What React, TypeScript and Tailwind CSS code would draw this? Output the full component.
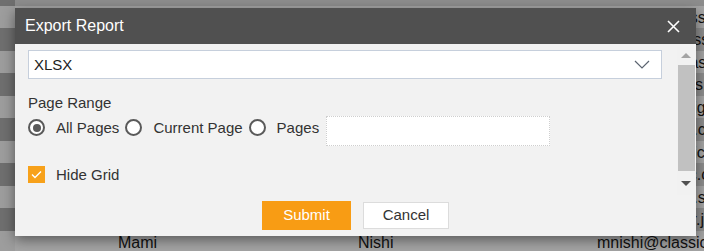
import React from "react";

const rows = [
  { first: "", last: "", email: "" },
  { first: "Yuki", last: "Tanaka", email: "ytanaka@classic.jp" },
  { first: "Hiro", last: "Ito", email: "hito@mail.classic.jp" },
  { first: "Aiko", last: "Mori", email: "amori@my.class.jp" },
  { first: "Taro", last: "Yamada", email: "tyamada@clas.m.jp" },
  { first: "Emi", last: "Kato", email: "ekato@clas.sight.jp" },
  { first: "Ryo", last: "Abe", email: "rabe@classic.co.jp" },
  { first: "Sora", last: "Ueda", email: "sueda@classic.ss.jp" },
  { first: "Nao", last: "Ono", email: "nono@classic.cr.jp" },
  { first: "Kaito", last: "Endo", email: "kendo@class.ss.jp" },
  { first: "Rina", last: "Goto", email: "rgoto@mail.cr.jp" },
  { first: "Mami", last: "Nishi", email: "mnishi@classic.jp" },
];

const Radio = ({ checked }: { checked?: boolean }) => (
  <span className="flex h-[17px] w-[17px] shrink-0 items-center justify-center rounded-full border-2 border-[#5a5a5a] bg-white">
    {checked && <span className="h-[8px] w-[8px] rounded-full bg-[#5a5a5a]" />}
  </span>
);

export default function App() {
  return (
    <div className="relative h-[251px] w-[704px] overflow-hidden bg-[#8a8a8a] font-[family-name:'Liberation_Sans',Arial,sans-serif]">
      {/* grid behind the modal */}
      <div className="-mt-[17px] flex flex-col">
        {rows.map((r, i) => (
          <div
            key={i}
            className={`grid h-[22.5px] grid-cols-[15px_103px_240px_239px_1fr] items-center text-[16px] text-[#111] ${
              i % 2 === 0 ? "bg-[#8d8d8d]" : "bg-[#a4a4a4]"
            }`}
          >
            <span className={`h-full ${i % 2 === 0 ? "bg-[#6f6f6f]" : "bg-[#9d9d9d]"}`} />
            <span />
            <span className="whitespace-nowrap">{r.first}</span>
            <span className="whitespace-nowrap">{r.last}</span>
            <span className="whitespace-nowrap">{r.email}</span>
          </div>
        ))}
      </div>

      {/* modal */}
      <div className="absolute left-[15px] top-[8px] flex h-[228px] w-[681px] flex-col bg-[#f2f2f2] shadow-[0_4px_12px_rgba(0,0,0,0.45)]">
        <div className="flex h-[36px] shrink-0 items-center justify-between bg-[#505050] pl-[10px] pr-[16px]">
          <span className="text-[16px] leading-[18px] text-white">Export Report</span>
          <svg width="13" height="13" viewBox="0 0 13 13">
            <path d="M1 1L12 12M12 1L1 12" stroke="#fff" strokeWidth="1.6" />
          </svg>
        </div>

        <div className="flex h-[152px] shrink-0">
          <div className="flex w-[647px] flex-col pl-[13px] pt-[6px] text-[15px] text-[#333]">
            <div className="flex h-[29px] items-center justify-between border border-[#c6cfdc] bg-white pl-[5px] pr-[11px]">
              <span className="leading-[17px] text-[#222]">XLSX</span>
              <svg width="16" height="9" viewBox="0 0 16 9">
                <path d="M1 1L8 8L15 1" fill="none" stroke="#5b6470" strokeWidth="1.2" />
              </svg>
            </div>

            <div className="mt-[15px] leading-[17px]">Page Range</div>

            <div className="mt-[5px] flex items-start">
              <div className="mt-[3px] flex h-[17px] items-center">
                <Radio checked />
                <span className="ml-[11px] leading-[17px]">All Pages</span>
              </div>
              <div className="ml-[6px] mt-[3px] flex h-[17px] items-center">
                <Radio />
                <span className="ml-[11px] leading-[17px]">Current Page</span>
              </div>
              <div className="ml-[6px] mt-[3px] flex h-[17px] items-center">
                <Radio />
                <span className="ml-[11px] leading-[17px]">Pages</span>
              </div>
              <div className="ml-[7px] h-[30px] w-[224px] border border-dotted border-[#cfcfcf] bg-white" />
            </div>

            <div className="mt-[20px] flex items-center">
              <span className="flex h-[17px] w-[17px] items-center justify-center bg-[#f7a11a]">
                <svg width="11" height="9" viewBox="0 0 11 9">
                  <path d="M1 4.5L4 7.5L10 1.5" fill="none" stroke="#fff" strokeWidth="1.4" />
                </svg>
              </span>
              <span className="ml-[11px] leading-[17px]">Hide Grid</span>
            </div>
          </div>

          {/* scrollbar */}
          <div className="ml-[15px] mt-[3px] flex h-[148px] w-[18px] flex-col items-center bg-[#f1f1f1]">
            <div className="mt-[6px] h-0 w-0 border-x-[5px] border-b-[5px] border-x-transparent border-b-[#a3a3a3]" />
            <div className="mt-[7px] h-[106px] w-[17px] bg-[#c1c1c1]" />
            <div className="mt-[10px] h-0 w-0 border-x-[5px] border-t-[5px] border-x-transparent border-t-[#505050]" />
          </div>
        </div>

        <div className="flex flex-1 items-start justify-center gap-[12px] pt-[5px]">
          <button className="h-[29px] w-[89px] bg-[#f89c14] text-[15px] text-white">Submit</button>
          <button className="mt-[1px] h-[27px] w-[86px] border border-[#dcdcdc] bg-white text-[15px] text-[#333]">
            Cancel
          </button>
        </div>
      </div>
    </div>
  );
}
